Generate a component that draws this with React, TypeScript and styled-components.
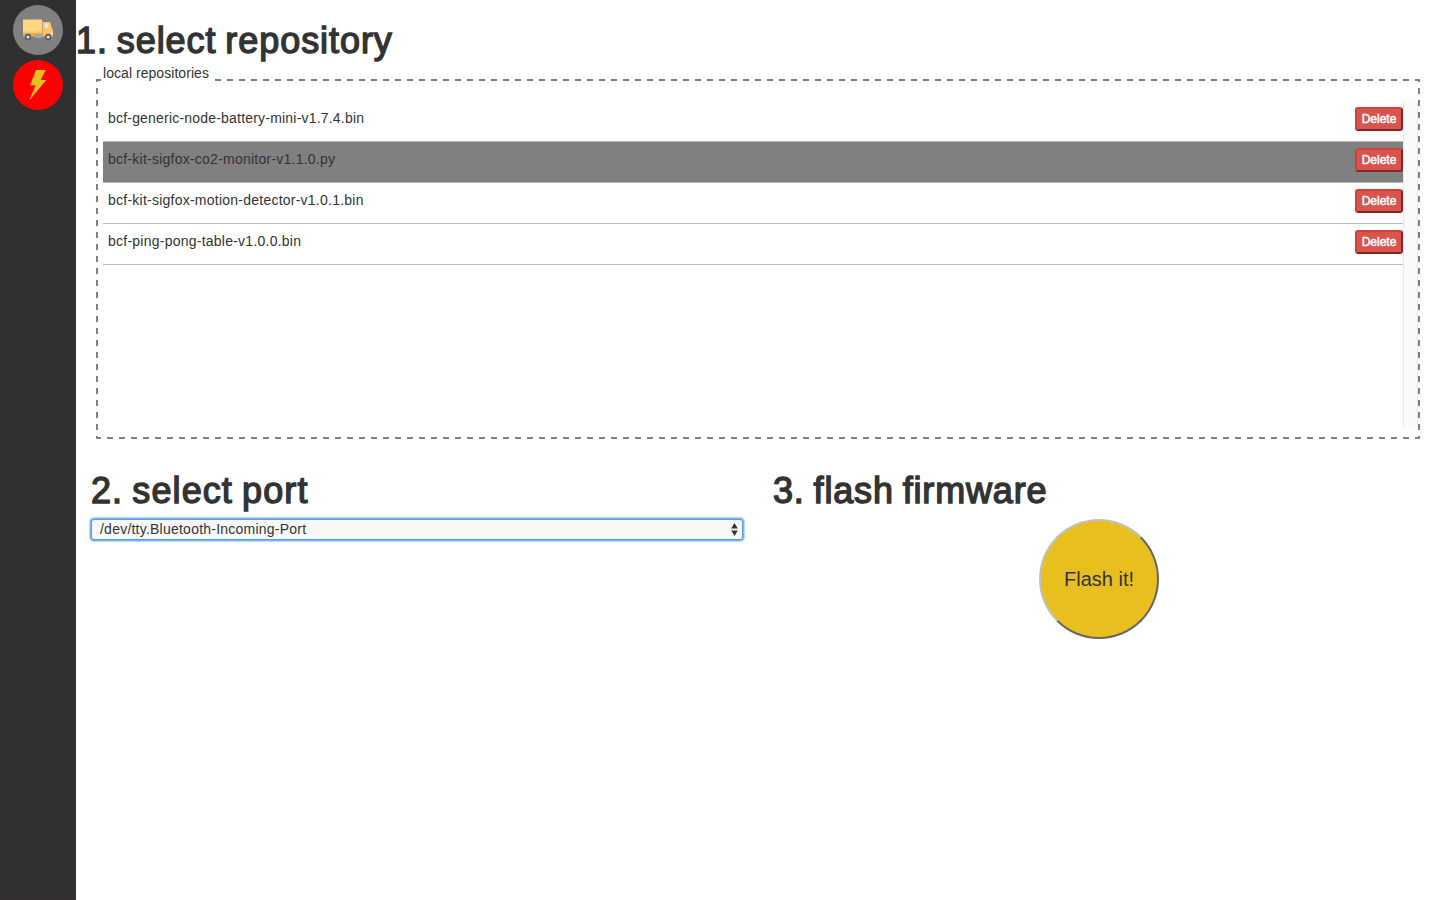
import React, { useState } from 'react';
import styled, { createGlobalStyle } from 'styled-components';

const GlobalStyle = createGlobalStyle`
  *, *::before, *::after { box-sizing: border-box; }
  body {
    margin: 0;
    background: #fff;
    color: #333;
    font: 14px/20px "Liberation Sans", Arial, sans-serif;
  }
`;

const Page = styled.div`
  display: flex;
  height: 100vh;
  overflow: hidden;
`;

const Sidebar = styled.nav`
  flex: 0 0 76px;
  display: flex;
  flex-direction: column;
  align-items: center;
  gap: 5px;
  padding-top: 5px;
  background: #303030;
  border-bottom: 2px solid #342e31;
`;

const NavButton = styled.button<{ $color: string }>`
  display: flex;
  align-items: center;
  justify-content: center;
  width: 50px;
  height: 50px;
  padding: 0;
  border: 0;
  border-radius: 50%;
  background: ${({ $color }) => $color};
`;

const Main = styled.main`
  flex: 1;
  min-width: 0;
`;

const Heading = styled.h1<{ $spacing: number }>`
  margin: 0;
  font-size: 36px;
  font-weight: 400;
  line-height: 40px;
  letter-spacing: ${({ $spacing }) => $spacing}px;
  word-spacing: -2px;
  -webkit-text-stroke: 1.4px #333;
  white-space: nowrap;
`;

const RepositorySection = styled.section`
  padding-top: 21px;
`;

const Repositories = styled.fieldset`
  height: 376px;
  min-width: 0;
  margin: 2px 20px 0;
  padding: 4px 0 10px 5px;
  border: 2px solid transparent;
  background:
    linear-gradient(90deg, gray 6px, transparent 6px) -1px 0 / 12px 2px repeat-x border-box,
    linear-gradient(90deg, gray 6px, transparent 6px) -1px 100% / 12px 2px repeat-x border-box,
    linear-gradient(gray 6px, transparent 6px) 0 -3px / 2px 12px repeat-y border-box,
    linear-gradient(gray 6px, transparent 6px) 100% -3px / 2px 12px repeat-y border-box;
`;

const Legend = styled.legend`
  width: 114px;
  margin-left: -2px;
  padding: 0 0 14px 2px;
  background: #fff;
  letter-spacing: 0.05px;
  white-space: nowrap;
`;

const ScrollArea = styled.div`
  display: flex;
  height: 326px;
`;

const List = styled.ul`
  flex: 1;
  margin: 0;
  padding: 0;
  list-style: none;
`;

const Track = styled.div`
  width: 15px;
  background: #fafafa;
  border: solid #e8e8e8;
  border-width: 0 1px;
`;

const Row = styled.li<{ $selected: boolean }>`
  display: flex;
  align-items: flex-start;
  justify-content: space-between;
  height: 41px;
  padding: 6px 0 0 5px;
  border-bottom: 1px solid #bbb;
  background: ${({ $selected }) => ($selected ? '#808080' : 'transparent')};
`;

const FileName = styled.span<{ $spacing: number }>`
  padding-top: 1px;
  letter-spacing: ${({ $spacing }) => $spacing}px;
`;

const DeleteButton = styled.button`
  width: 48px;
  height: 24px;
  padding: 0;
  border: 2px outset #d43f3a;
  border-radius: 3px;
  background: #d9534f;
  color: #fff;
  font: 12px/18px "Liberation Sans", Arial, sans-serif;
  -webkit-text-stroke: 0.5px #fff;
`;

const Actions = styled.div`
  display: grid;
  grid-template-columns: 1fr 1fr;
  padding-top: 32px;
`;

const Step = styled.section`
  padding: 0 15px;
`;

const PortSelect = styled.button`
  display: flex;
  align-items: center;
  justify-content: space-between;
  width: 100%;
  height: 21px;
  margin-top: 8px;
  padding: 0 4px 0 8px;
  border: 1px solid #5a9ce6;
  border-radius: 3px;
  background: #f8f8f8;
  box-shadow: 0 0 0 1px #7ab5f6, 0 0 1px 2px #b5d7fc;
  color: #333;
  font: 14px/18px "Liberation Sans", Arial, sans-serif;
  letter-spacing: 0.23px;
`;

const PortName = styled.span`
  padding-bottom: 2px;
`;

const FlashButton = styled.button`
  display: block;
  width: 120px;
  height: 120px;
  margin: 8px auto 0;
  padding: 0;
  border: 2px solid;
  border-color: #c0c0c0 #666 #666 #c0c0c0;
  border-radius: 50%;
  background: #e8bf1e;
  color: #333;
  font: 20px/24px "Liberation Sans", Arial, sans-serif;
`;

const TruckIcon = () => (
  <svg width="32" height="32" viewBox="0 0 32 32">
    <path d="M1 19h19v3.5H1z" fill="#e9ad51" />
    <path d="M1 5.5h19V19H1z" fill="#ffd782" />
    <path d="M1 17.5h19V19H1z" fill="#f5c56a" />
    <path d="M20.8 8H27q1.2 0 1.6 1.2L30 14.5l1 1v7H20.8z" fill="#ffc35b" />
    <path d="M22.3 9.6h3.5l1.2 4.6h-4.7z" fill="#c9edf5" />
    <path d="M20.4 7v15.5" stroke="#e9ad51" strokeWidth=".8" />
    <path d="M13 20.3h7v3.7h-7z" fill="#8d9baa" />
    <path d="M15 20.3V24m2-3.7V24m2-3.7V24" stroke="#b9c4ce" strokeWidth=".7" />
    <circle cx="6" cy="23" r="3.2" fill="#545d70" />
    <circle cx="6" cy="23" r="1.6" fill="#d4dce6" />
    <circle cx="26.2" cy="23" r="3.2" fill="#545d70" />
    <circle cx="26.2" cy="23" r="1.6" fill="#d4dce6" />
    <path d="M29.4 18.5H31v2h-1.6z" fill="#fff0c9" />
  </svg>
);

const BoltIcon = () => (
  <svg width="32" height="32" viewBox="0 0 32 32">
    <path d="M14 1H23.8L18.7 11H24.2L7.2 31.5 13.6 16.3H8z" fill="#e8bf1e" />
  </svg>
);

const StepperIcon = () => (
  <svg width="7" height="13" viewBox="0 0 7 13">
    <path d="M3.5 0 6.8 5.4H.2zM3.5 13 .2 7.6h6.6z" fill="#333" />
  </svg>
);

const files = [
  { name: 'bcf-generic-node-battery-mini-v1.7.4.bin', spacing: 0.2 },
  { name: 'bcf-kit-sigfox-co2-monitor-v1.1.0.py', spacing: 0.24 },
  { name: 'bcf-kit-sigfox-motion-detector-v1.0.1.bin', spacing: 0.24 },
  { name: 'bcf-ping-pong-table-v1.0.0.bin', spacing: 0.24 },
];

export default function App() {
  const [selected, setSelected] = useState(1);
  return (
    <Page>
      <GlobalStyle />
      <Sidebar>
        <NavButton $color="#808080" aria-label="Repositories"><TruckIcon /></NavButton>
        <NavButton $color="#ff0000" aria-label="Flash"><BoltIcon /></NavButton>
      </Sidebar>
      <Main>
        <RepositorySection>
          <Heading $spacing={0.93}>1. select repository</Heading>
          <Repositories>
            <Legend>local repositories</Legend>
            <ScrollArea>
              <List>
                {files.map((file, index) => (
                  <Row key={file.name} $selected={index === selected} onClick={() => setSelected(index)}>
                    <FileName $spacing={file.spacing}>{file.name}</FileName>
                    <DeleteButton>Delete</DeleteButton>
                  </Row>
                ))}
              </List>
              <Track />
            </ScrollArea>
          </Repositories>
        </RepositorySection>
        <Actions>
          <Step>
            <Heading $spacing={1.1}>2. select port</Heading>
            <PortSelect><PortName>/dev/tty.Bluetooth-Incoming-Port</PortName><StepperIcon /></PortSelect>
          </Step>
          <Step>
            <Heading $spacing={0.84}>3. flash firmware</Heading>
            <FlashButton>Flash it!</FlashButton>
          </Step>
        </Actions>
      </Main>
    </Page>
  );
}
